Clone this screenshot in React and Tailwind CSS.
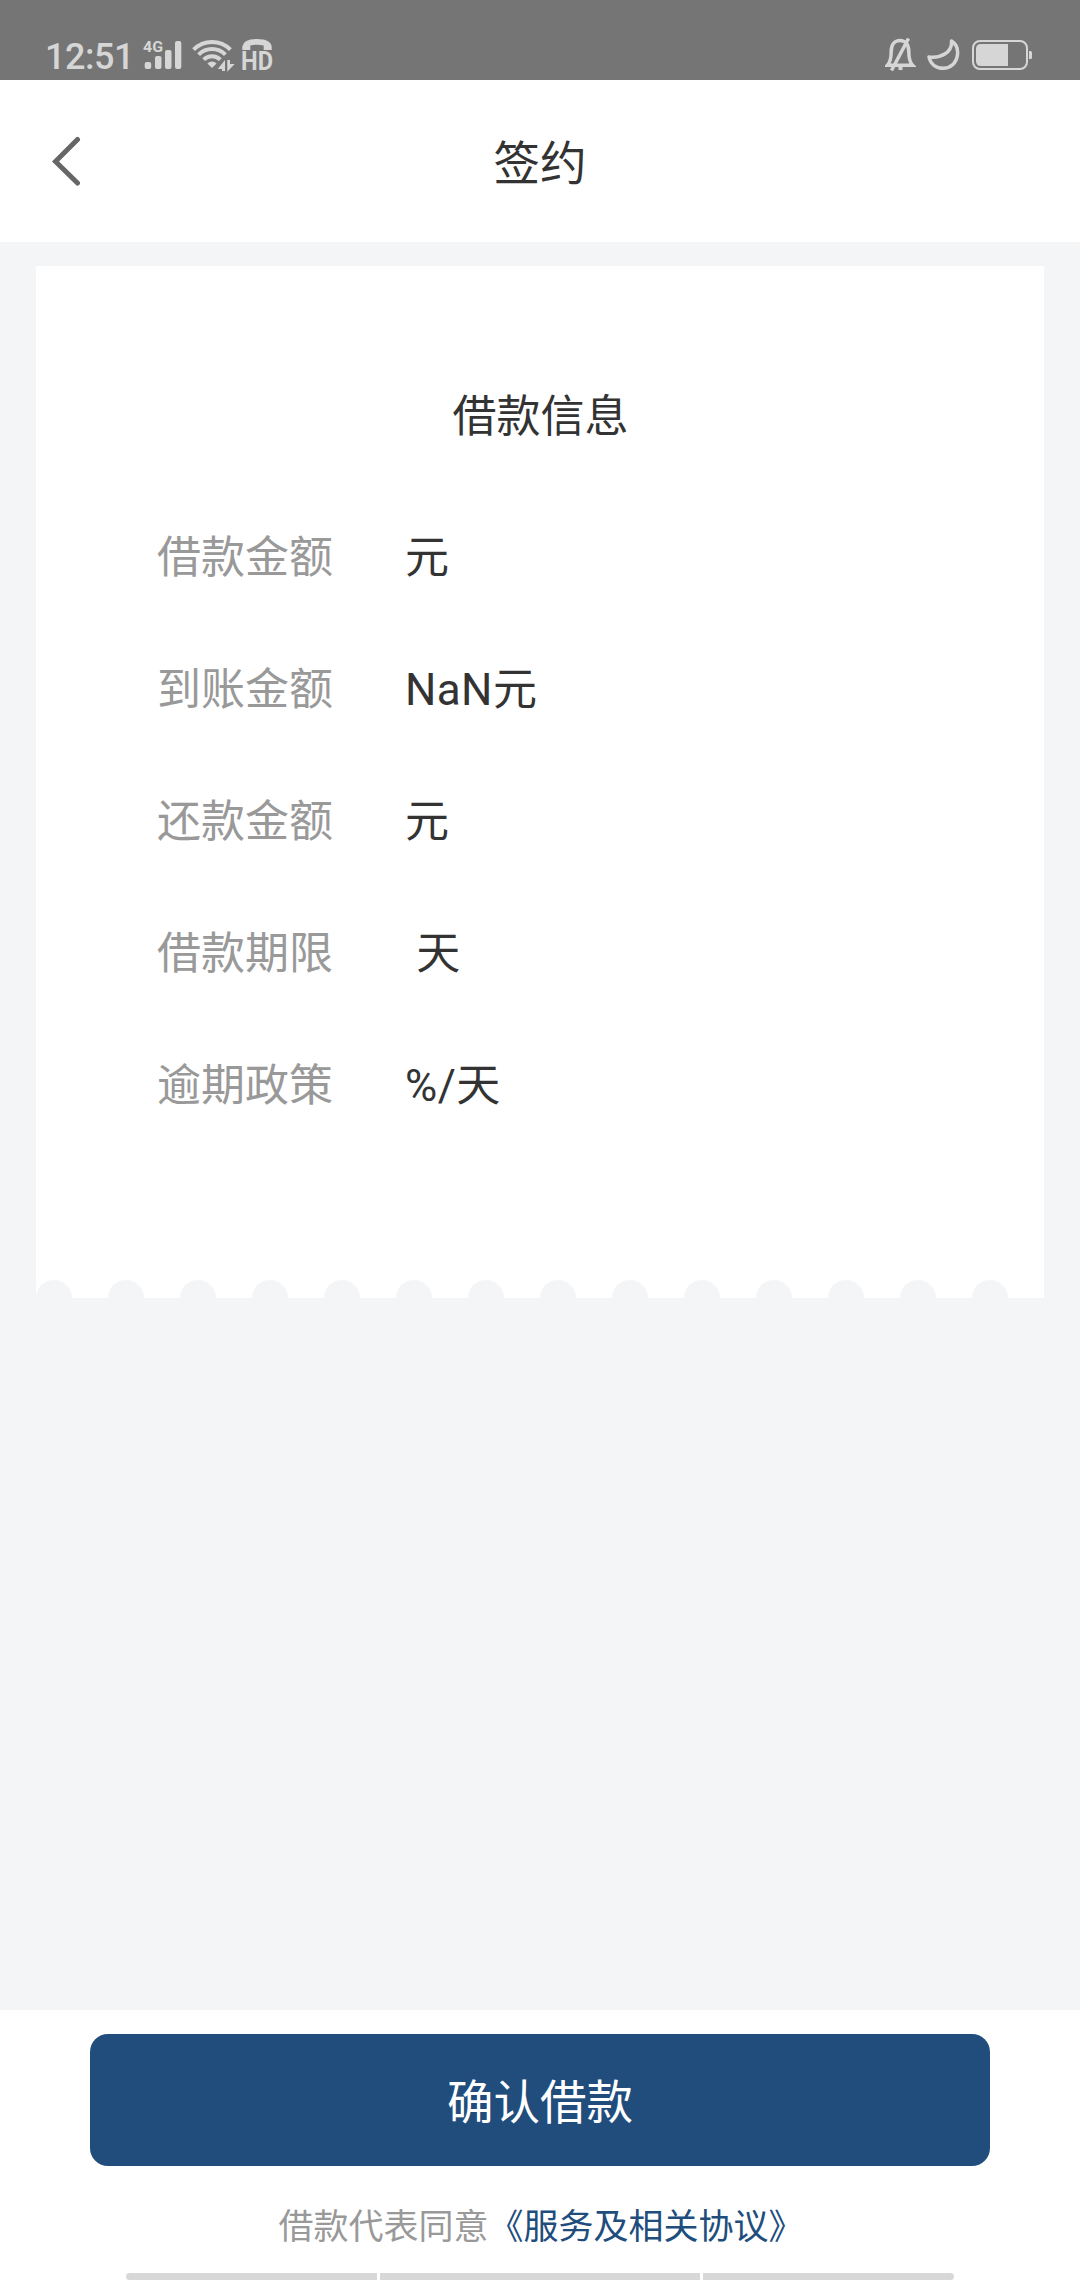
import React from "react";

const loanRows = [
  { label: "借款金额", value: "元" },
  { label: "到账金额", value: "NaN元" },
  { label: "还款金额", value: "元" },
  { label: "借款期限", value: "\u00a0天" },
  { label: "逾期政策", value: "%/天" },
];

const notches = Array.from({ length: 14 }, (_, i) => i);

const SignalIcon = () => (
  <svg className="overflow-visible" width="42" height="34" viewBox="0 0 42 34" fill="currentColor">
    <text x="0" y="14" fontSize="15" fontWeight="700" textLength="20" lengthAdjust="spacingAndGlyphs">
      4G
    </text>
    <rect x="1.7" y="24" width="6.5" height="7" rx="2" />
    <rect x="12" y="18" width="6.5" height="13" rx="2" />
    <rect x="22" y="12" width="6.5" height="19" rx="2" />
    <rect x="32" y="3" width="6.3" height="28" rx="2" />
  </svg>
);

const WifiIcon = () => (
  <svg width="44" height="34" viewBox="0 0 44 34" fill="none" stroke="currentColor" strokeWidth="4">
    <path d="M1.600 11.600a26 26 0 0 1 36.800 0" />
    <path d="M6.600 16.600a19 19 0 0 1 26.800 0" />
    <path d="M11.700 21.700a11.700 11.700 0 0 1 16.600 0" />
    <path d="M15.400 25.400a6.500 6.500 0 0 1 9.200 0L20 30z" fill="currentColor" stroke="none" />
    <g fill="currentColor" stroke="#757575" strokeWidth="2" paintOrder="stroke">
      <path d="M25.700 31L33 22v11h-3v-2z" />
      <path d="M35.300 22h2.700v4h4.700l-7.400 7.700z" />
    </g>
  </svg>
);

const HdIcon = () => (
  <svg className="overflow-visible" width="32" height="34" viewBox="0 0 32 34" fill="currentColor">
    <path d="M.3 12V8.500Q1.500 1 15 1T29.700 8.500V12h-8V7.500q-6.500-1.600-13.400 0V12z" />
    <text x="-1" y="32" fontSize="25.500" fontWeight="700" textLength="32" lengthAdjust="spacingAndGlyphs">
      HD
    </text>
  </svg>
);

const MuteIcon = () => (
  <svg width="31" height="34" viewBox="0 0 31 34" fill="none" stroke="currentColor" strokeWidth="3.500">
    <path d="M2.500 27.200C5.500 24 6.200 21 6.200 13.500c0-7 3.500-11 8.800-11s8.800 4 8.800 11c0 7.500.7 10.500 3.700 13.700z" />
    <path d="M23.500 .5L6.500 32.500" />
    <path d="M13.500 30.300h4" />
  </svg>
);

const MoonIcon = () => (
  <svg width="33" height="34" viewBox="0 0 33 34" fill="none" stroke="currentColor" strokeWidth="3.500" strokeLinejoin="round">
    <path d="M24.500 3C30 6.500 31 12 30.500 16.500 29.500 25.500 23 30.300 16.500 30.300 9 30.300 3.500 26 2 19 13 20.500 25.500 15 24.500 3z" />
  </svg>
);

const BatteryIcon = () => (
  <svg width="61" height="34" viewBox="0 0 61 34" fill="currentColor">
    <rect x="1" y="3" width="54" height="28" rx="7" fill="none" stroke="currentColor" strokeWidth="2" />
    <path d="M36 6v22H9q-5 0-5-5V11q0-5 5-5z" />
    <path d="M57 13h1.500q1.500 0 1.500 1.500v5q0 1.500-1.500 1.500H57z" />
  </svg>
);

const StatusBar = () => (
  <div className="flex h-20 items-end justify-between bg-[#757575] pb-2 pr-[47px] pl-[45px] text-[#d6d6d6]">
    <div className="flex items-end">
      <span className="mr-[11px] -mb-[4px] w-[87px] text-[36px] leading-[38px] font-medium tracking-[-0.5px] whitespace-nowrap">
        12:51
      </span>
      <SignalIcon />
      <span className="ml-[7px]">
        <WifiIcon />
      </span>
      <span className="ml-[6px]">
        <HdIcon />
      </span>
    </div>
    <div className="flex items-end">
      <MuteIcon />
      <span className="ml-[11px]">
        <MoonIcon />
      </span>
      <span className="ml-[12px]">
        <BatteryIcon />
      </span>
    </div>
  </div>
);

const Header = () => (
  <header className="grid h-[162px] grid-cols-3 items-center bg-white px-[52px]">
    <svg width="30" height="50" viewBox="0 0 30 50" fill="none" stroke="#666" strokeWidth="5" strokeLinecap="round">
      <path d="M25.500 3.500L3.500 25.500l22 21.500" />
    </svg>
    <h1 className="pt-[7px] text-center text-[46.500px] leading-none">签约</h1>
  </header>
);

const LoanCard = () => (
  <section className="mx-9 mt-6 flex h-[1032px] flex-col bg-white">
    <h2 className="mt-[118px] pl-px text-center text-[44px] leading-[66px]">借款信息</h2>
    <dl className="mt-[42px] flex-1 pl-[121px]">
      {loanRows.map((row) => (
        <div key={row.label} className="flex h-[132px] items-center text-[44px] leading-[66px]">
          <dt className="w-[248px] text-[#999]">{row.label}</dt>
          <dd className="tracking-[0.4px]">{row.value}</dd>
        </div>
      ))}
    </dl>
    {/* ticket edge */}
    <div className="flex gap-9">
      {notches.map((n) => (
        <div key={n} className="h-[18px] w-9 rounded-t-full bg-[#f4f5f7]"></div>
      ))}
    </div>
  </section>
);

const Footer = () => (
  <footer className="flex h-[270px] flex-col bg-white pt-6">
    <button className="mx-[90px] h-[132px] rounded-[18px] bg-[#204d7c] pt-[8px] text-[46.500px] text-white">
      确认借款
    </button>
    <p className="mt-[36px] pl-[2px] text-center text-[35px] leading-[52px] text-[#999]">
      借款代表同意<span className="text-[#204d7c]">《服务及相关协议》</span>
    </p>
    {/* system gesture hints */}
    <div className="mx-[126px] mt-auto flex h-[7px] gap-[3px]">
      <div className="flex-1 rounded-l-full bg-[#d8d8d8]"></div>
      <div className="w-[320px] bg-[#d8d8d8]"></div>
      <div className="flex-1 rounded-r-full bg-[#d8d8d8]"></div>
    </div>
  </footer>
);

export default function App() {
  return (
    <div className="flex h-[2280px] w-[1080px] flex-col overflow-hidden bg-[#f4f5f7] font-[Roboto,'Noto_Sans_CJK_SC',sans-serif] text-[#333]">
      <StatusBar />
      <Header />
      <main className="flex-1">
        <LoanCard />
      </main>
      <Footer />
    </div>
  );
}
